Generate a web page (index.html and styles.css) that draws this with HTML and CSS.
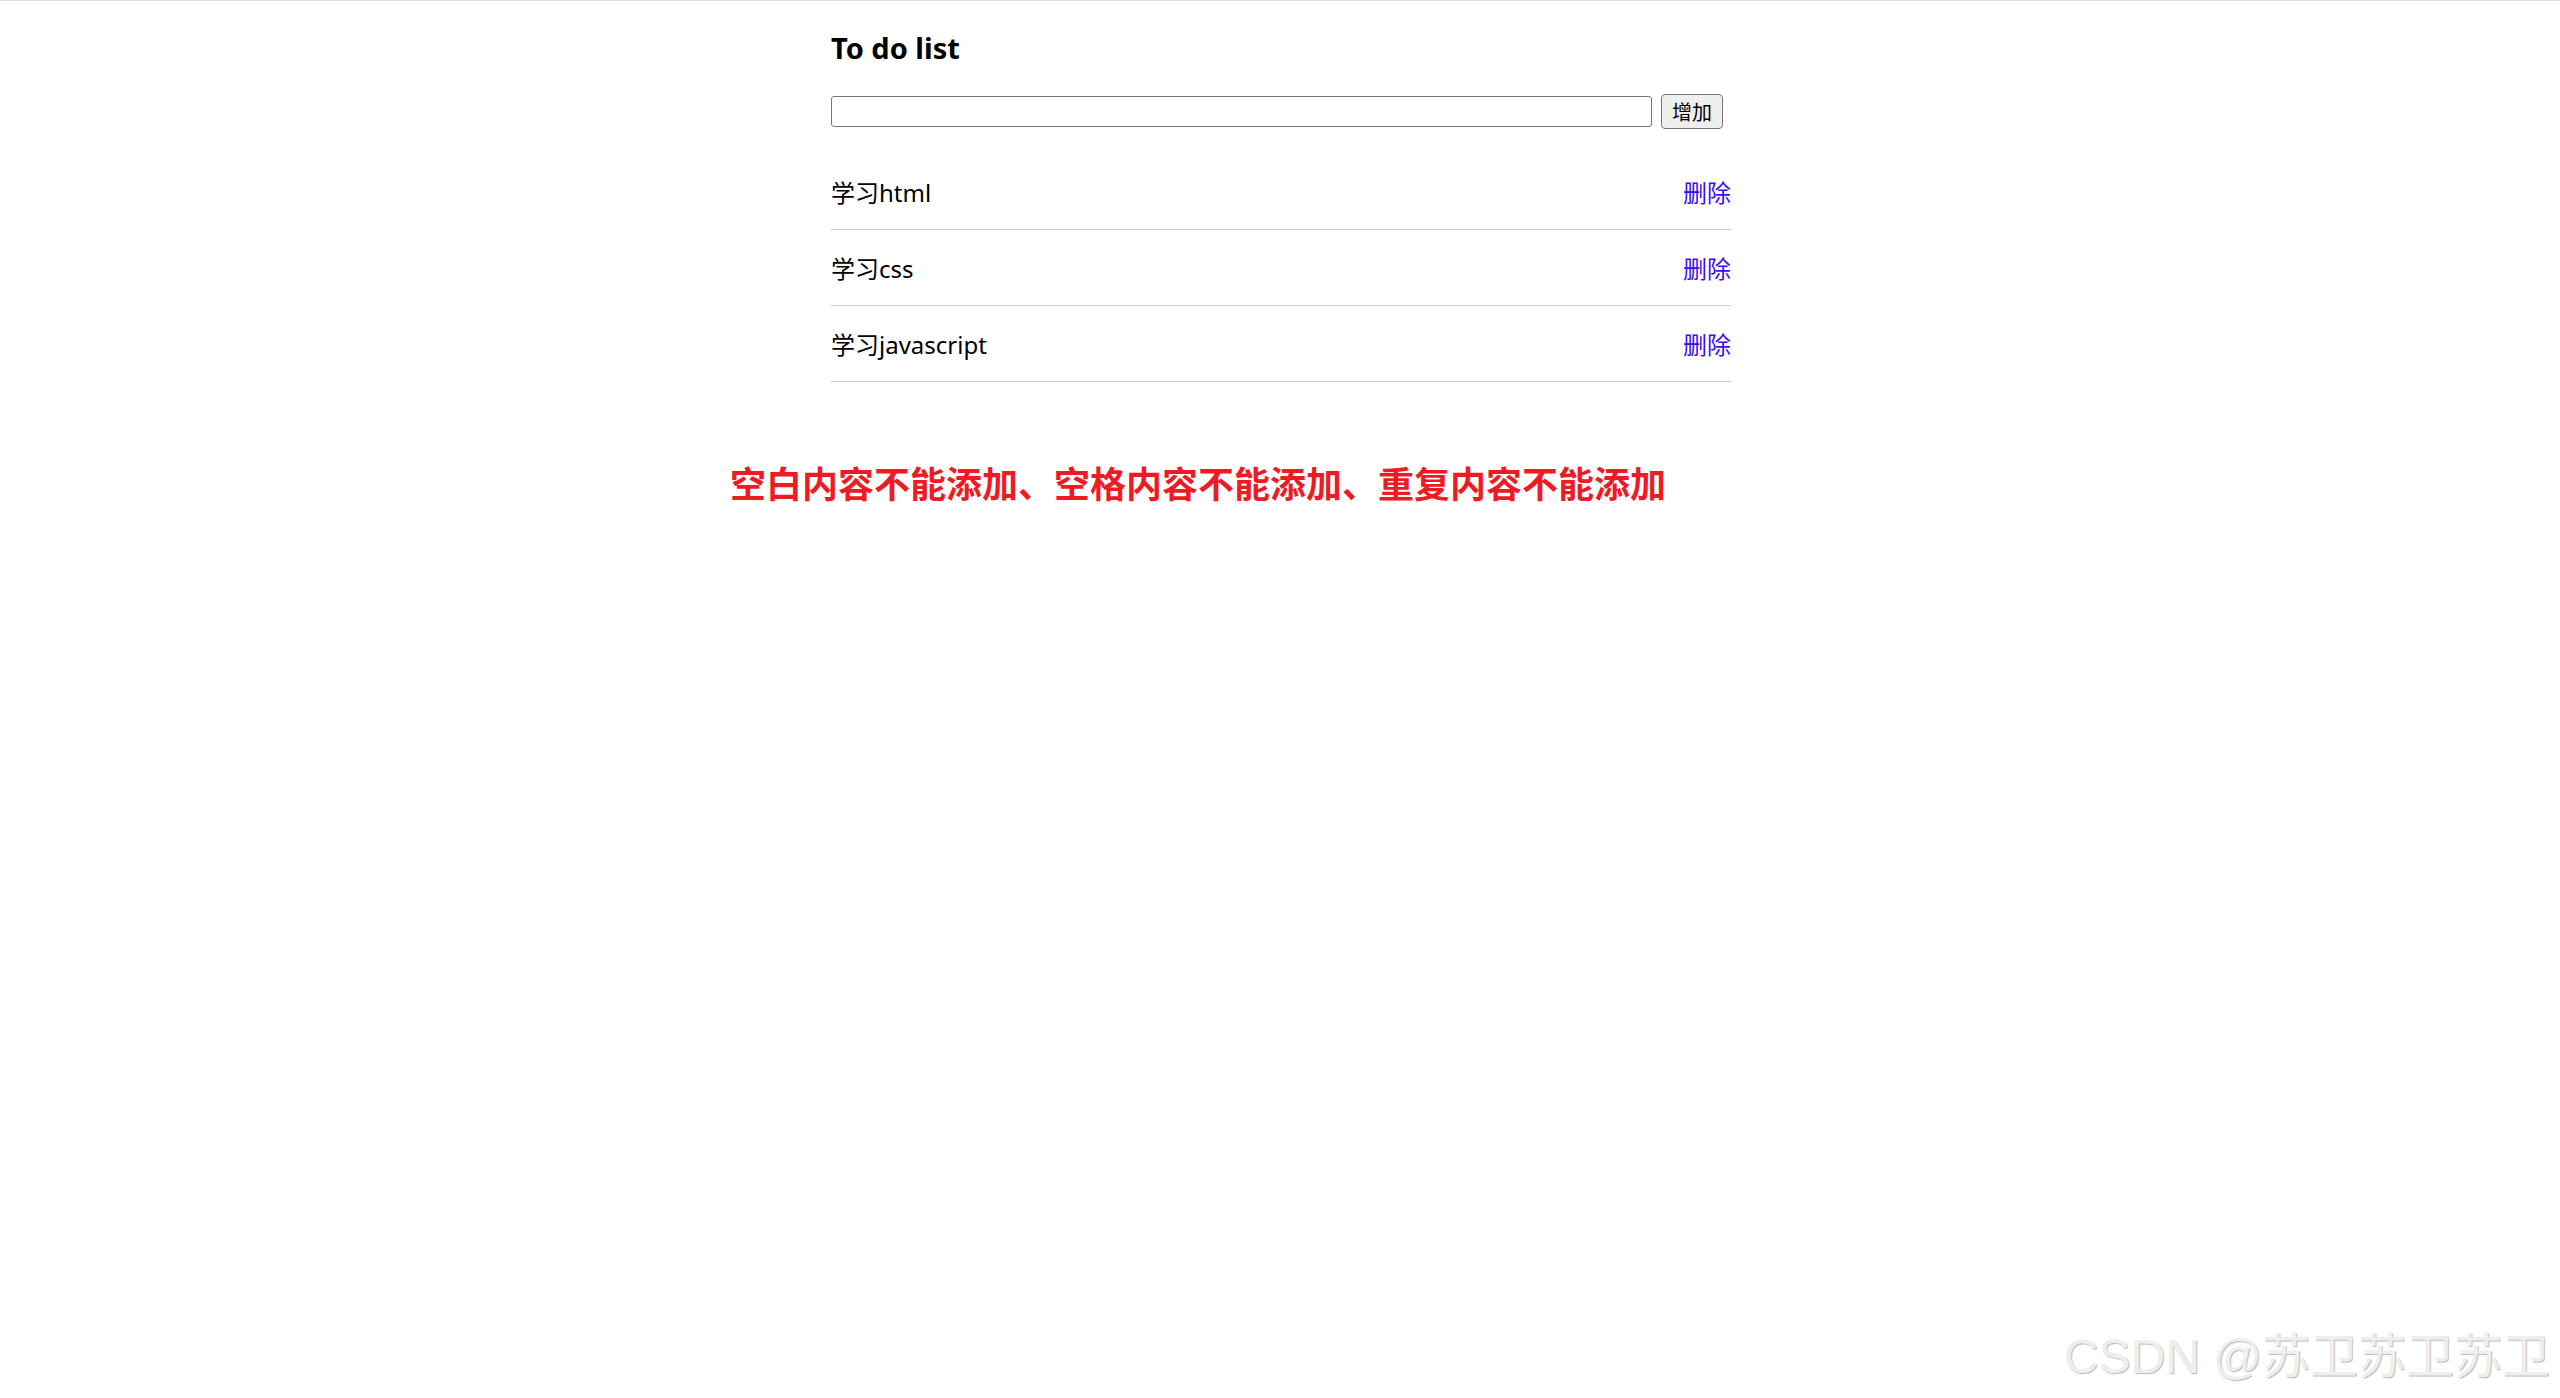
FILE: index.html
```html
<!DOCTYPE html>
<html lang="zh-CN">
<head>
    <meta charset="UTF-8">
    <meta name="viewport" content="width=device-width, initial-scale=1.0">
    <title>To do list</title>
    <link rel="stylesheet" href="styles.css">
</head>
<body>
    <div id="app">
        <h3 class="title">To do list</h3>
        <div class="add-bar">
            <input type="text" class="add-input">
            <button class="add-btn">增加</button>
        </div>
        <ul class="todo-list">
            <li class="todo-item">
                <span>学习html</span>
                <a href="#" class="del">删除</a>
            </li>
            <li class="todo-item">
                <span>学习css</span>
                <a href="#" class="del">删除</a>
            </li>
            <li class="todo-item">
                <span>学习javascript</span>
                <a href="#" class="del">删除</a>
            </li>
        </ul>
    </div>
    <h2 class="tip">空白内容不能添加、空格内容不能添加、重复内容不能添加</h2>
    <div class="watermark">CSDN @苏卫苏卫苏卫</div>
</body>
</html>
```
FILE: styles.css
```css
html, body {
    height: 100%;
}

body {
    margin: 0;
    border-top: 1px solid #dedede;
    box-sizing: border-box;
    font-family: "Noto Sans", "Noto Sans CJK SC", sans-serif;
    color: #000;
    background: #fff;
    position: relative;
    overflow: hidden;
}

#app {
    width: 900px;
    margin: 0 auto;
    padding-left: 2px;
}

.title {
    margin: 28px 0 0;
    font-size: 29px;
    line-height: 38px;
    font-weight: bold;
}

.add-bar {
    display: flex;
    align-items: center;
    gap: 9px;
    margin-top: 27px;
    height: 35px;
}

.add-input {
    width: 821px;
    height: 31px;
    box-sizing: border-box;
    border: 1px solid #767676;
    border-radius: 3px;
    padding: 0 4px;
    font-size: 20px;
    margin: 0;
}

.add-btn {
    width: 62px;
    height: 35px;
    box-sizing: border-box;
    border: 1px solid #767676;
    border-radius: 4px;
    background: #efefef;
    font-family: "Noto Sans CJK SC", sans-serif;
    font-size: 20px;
    color: #000;
    padding: 0;
    margin: 0;
}

.todo-list {
    list-style: none;
    margin: 25px 0 0;
    padding: 0;
}

.todo-item {
    display: flex;
    justify-content: space-between;
    align-items: center;
    height: 75px;
    border-bottom: 1px solid #cccccc;
    font-size: 24px;
}

.del {
    color: #3a0cf2;
    text-decoration: none;
}

.tip {
    width: 1100px;
    margin: 79px auto 0;
    font-size: 36px;
    line-height: 48px;
    font-weight: bold;
    color: #ed1c24;
}

.watermark {
    position: absolute;
    right: 10px;
    bottom: 17px;
    font-family: "Liberation Sans", "Noto Sans CJK SC", sans-serif;
    font-size: 48px;
    line-height: 48px;
    color: #eeeeee;
    text-shadow: 1px 1px 1px #b8b8b8;
    white-space: nowrap;
}
```
